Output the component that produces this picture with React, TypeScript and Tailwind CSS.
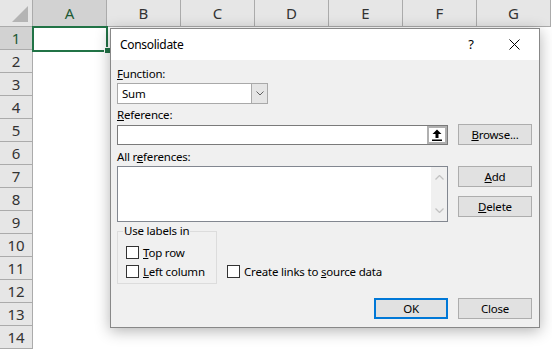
import React from "react";

const cols = ["A", "B", "C", "D", "E", "F", "G"];
const rows = Array.from({ length: 14 }, (_, i) => i + 1);

function Btn({ children, primary = false }: { children: React.ReactNode; primary?: boolean }) {
  return (
    <div
      className={
        "w-[74px] h-[21px] flex items-center justify-center bg-[#e1e1e1] text-black " +
        (primary ? "border-2 border-[#0078d7]" : "border border-[#adadad]")
      }
    >
      {children}
    </div>
  );
}

function Check({ children }: { children: React.ReactNode }) {
  return (
    <div className="flex items-center h-[19px] gap-[4px]">
      <div className="w-[13px] h-[13px] bg-white border border-[#333333]" />
      <span className="text-black leading-none">{children}</span>
    </div>
  );
}

export default function App() {
  return (
    <div
      className="relative w-[552px] h-[350px] bg-white overflow-hidden"
      style={{ fontFamily: '"Noto Sans", "Open Sans", sans-serif' }}
    >
      <div className="grid grid-cols-[33px_repeat(7,74px)] grid-rows-[27px_repeat(14,23px)]">
        <div className="relative bg-[#e6e6e6] border-r border-b border-[#ababab]">
          <svg className="absolute right-[4px] bottom-[4px]" width="16" height="16" viewBox="0 0 16 16">
            <polygon points="16,0 16,16 0,16" fill="#b4b4b4" />
          </svg>
        </div>
        {cols.map((c) => (
          <div
            key={c}
            className={
              "flex items-center justify-center text-[15px] border-r border-b border-[#ababab] " +
              (c === "A" ? "bg-[#d2d2d2] text-[#1d5a36]" : "bg-[#e6e6e6] text-[#333333]")
            }
          >
            {c}
          </div>
        ))}
        {rows.map((r) => (
          <React.Fragment key={r}>
            <div
              className={
                "flex items-center justify-center text-[15px] border-r border-b border-[#ababab] " +
                (r === 1 ? "bg-[#d2d2d2] text-[#1d5a36]" : "bg-[#e6e6e6] text-[#333333]")
              }
            >
              {r}
            </div>
            {cols.map((c) => (
              <div key={c} className="bg-white" />
            ))}
          </React.Fragment>
        ))}
      </div>

      {/* selection */}
      <div className="absolute left-[32px] top-[26px] w-[76px] h-[26px] border-2 border-[#217346]" />
      <div className="absolute left-[104px] top-[47px] w-[7px] h-[7px] bg-[#217346] border border-white" />

      {/* dialog */}
      <div className="absolute left-[110px] top-[28px] w-[430px] h-[300px] flex flex-col bg-[#f0f0f0] border border-[#888888] shadow-[0_3px_14px_rgba(0,0,0,0.3)] text-[11.5px] tracking-[-0.2px]">
        <div className="h-[31px] bg-white flex items-center pl-[9px] shrink-0">
          <span className="text-[12px] tracking-[-0.3px] text-black">Consolidate</span>
          <span className="ml-auto text-[13px] text-black w-[20px] text-center">?</span>
          <div className="w-[45px] flex items-center justify-center mr-[2px] ml-[11px]">
            <svg width="11" height="11" viewBox="0 0 11 11">
              <path d="M0.5 0.5 L10.5 10.5 M10.5 0.5 L0.5 10.5" stroke="#000" strokeWidth="1" />
            </svg>
          </div>
        </div>

        <div className="flex flex-col pl-[6px] pr-[7px] text-black">
          <div className="mt-[7px] h-[14px] leading-[14px]">
            <u>F</u>unction:
          </div>
          <div className="mt-[2px] w-[151px] h-[21px] flex border border-[#a9a9a9] bg-white">
            <div className="flex-1 flex items-center pl-[4px]">Sum</div>
            <div className="w-[16px] bg-[#e5e5e5] border-l border-[#a9a9a9] flex items-center justify-center">
              <svg width="8" height="5" viewBox="0 0 8 5">
                <path d="M0.5 0.5 L4 4 L7.5 0.5" fill="none" stroke="#606060" strokeWidth="1" />
              </svg>
            </div>
          </div>

          <div className="mt-[4px] h-[14px] leading-[14px]">
            <u>R</u>eference:
          </div>
          <div className="mt-[2px] h-[21px] flex gap-[10px]">
            <div className="mt-[1px] w-[331px] h-[20px] flex bg-white border border-[#7a7a7a]">
              <div className="flex-1" />
              <div className="w-[20px] h-[18px] border-2 border-[#b0b0b0] bg-white flex items-center justify-center">
                <svg width="10" height="12" viewBox="0 0 10 12">
                  <path d="M5 0.5 L9.5 5 L6.5 5 L6.5 9 L3.5 9 L3.5 5 L0.5 5 Z" fill="#000" />
                  <rect x="0" y="10.5" width="10" height="1.5" fill="#000" />
                </svg>
              </div>
            </div>
            <Btn>
              <span>
                <u>B</u>rowse...
              </span>
            </Btn>
          </div>

          <div className="mt-[5px] h-[14px] leading-[14px]">
            All r<u>e</u>ferences:
          </div>
          <div className="mt-[2px] flex gap-[10px]">
            <div className="w-[331px] h-[56px] flex bg-white border border-[#828790]">
              <div className="flex-1" />
              <div className="w-[16px] bg-[#f0f0f0] flex flex-col items-center justify-between py-[8px]">
                <svg width="9" height="5" viewBox="0 0 9 5">
                  <path d="M0.5 4.5 L4.5 0.5 L8.5 4.5" fill="none" stroke="#c2c2c2" strokeWidth="1.3" />
                </svg>
                <svg width="9" height="5" viewBox="0 0 9 5">
                  <path d="M0.5 0.5 L4.5 4.5 L8.5 0.5" fill="none" stroke="#c2c2c2" strokeWidth="1.3" />
                </svg>
              </div>
            </div>
            <div className="flex flex-col gap-[9px]">
              <Btn>
                <span>
                  <u>A</u>dd
                </span>
              </Btn>
              <Btn>
                <span>
                  <u>D</u>elete
                </span>
              </Btn>
            </div>
          </div>

          <div className="mt-[2px] flex items-end gap-[10px]">
            <fieldset className="w-[100px] border border-[#dcdcdc] pl-[8px] pt-[5px] pb-[2px]">
              <legend className="ml-[-3px] px-[1px] h-[14px] leading-[14px]">Use labels in</legend>
              <Check>
                <u>T</u>op row
              </Check>
              <Check>
                <u>L</u>eft column
              </Check>
            </fieldset>
            <div className="mb-[3px]">
              <Check>
                Create links to <u>s</u>ource data
              </Check>
            </div>
          </div>

          <div className="mt-[14px] flex justify-end gap-[10px]">
            <Btn primary>OK</Btn>
            <Btn>Close</Btn>
          </div>
        </div>
      </div>
    </div>
  );
}
